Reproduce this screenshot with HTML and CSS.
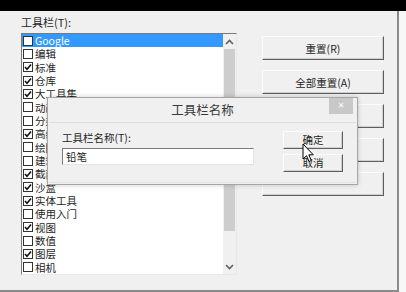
FILE: index.html
```html
<!DOCTYPE html>
<html lang="zh-CN">
<head>
  <meta charset="UTF-8">
  <title>工具栏</title>
  <link rel="stylesheet" href="styles.css">
</head>
<body>

  <div class="topbar"></div>

  <div class="screen">
    <div class="window">

      <!-- Toolbar list -->
      <div class="toolbars">
        <div class="label">工具栏(T):</div>
        <div class="listbox">
          <ul class="items">
            <li class="item selected"><span class="box"></span>Google</li>
            <li class="item"><span class="box"></span>编辑</li>
            <li class="item"><span class="box checked"></span>标准</li>
            <li class="item"><span class="box checked"></span>仓库</li>
            <li class="item"><span class="box checked"></span>大工具集</li>
            <li class="item"><span class="box"></span>动画</li>
            <li class="item"><span class="box"></span>分类</li>
            <li class="item"><span class="box checked"></span>高级镜头工具</li>
            <li class="item"><span class="box"></span>绘图</li>
            <li class="item"><span class="box"></span>建筑施工</li>
            <li class="item"><span class="box checked"></span>截面</li>
            <li class="item"><span class="box checked"></span>沙盒</li>
            <li class="item"><span class="box checked"></span>实体工具</li>
            <li class="item"><span class="box"></span>使用入门</li>
            <li class="item"><span class="box checked"></span>视图</li>
            <li class="item"><span class="box"></span>数值</li>
            <li class="item"><span class="box checked"></span>图层</li>
            <li class="item"><span class="box"></span>相机</li>
          </ul>
          <div class="scrollbar">
            <div class="arrow">
              <svg width="9" height="6" viewBox="0 0 9 6"><path d="M1 5 L4.5 1.5 L8 5" fill="none" stroke="#606060" stroke-width="1.6"/></svg>
            </div>
            <div class="thumb"></div>
            <div class="track"></div>
            <div class="arrow">
              <svg width="9" height="6" viewBox="0 0 9 6"><path d="M1 1 L4.5 4.5 L8 1" fill="none" stroke="#606060" stroke-width="1.6"/></svg>
            </div>
          </div>
        </div>
      </div>

      <!-- Buttons -->
      <div class="actions">
        <button class="btn">重置(R)</button>
        <button class="btn">全部重置(A)</button>
        <button class="btn"></button>
        <button class="btn"></button>
        <button class="btn"></button>
      </div>
    </div>

    <!-- Rename dialog -->
    <div class="dialog">
      <div class="dialog-title">
        工具栏名称
        <span class="close">&#x2715;</span>
      </div>
      <div class="dialog-body">
        <div class="field">
          <div class="field-label">工具栏名称(T):</div>
          <div class="input">铅笔</div>
        </div>
        <div class="dialog-buttons">
          <button class="btn small">确定</button>
          <button class="btn small">取消</button>
        </div>
      </div>
    </div>

    <svg class="cursor" width="13" height="20" viewBox="0 0 13 20">
      <path d="M1 1 L1 16 L4.5 12.7 L7 18.5 L9.3 17.5 L6.8 11.8 L11.3 11.8 Z" fill="#fff" stroke="#000" stroke-width="1" stroke-linejoin="round"/>
    </svg>
  </div>

</body>
</html>
```

FILE: styles.css
```css
body {
  margin: 0;
  width: 406px;
  height: 292px;
  overflow: hidden;
  background: #f7f7f7;
  color: #1e1e1e;
  font-family: "Noto Sans CJK SC", "Noto Sans", sans-serif;
  font-size: 11px;
}

.topbar {
  height: 11px;
  background: #000;
}

.screen {
  position: relative;
}

.window {
  box-sizing: border-box;
  width: 399px;
  height: 281px;
  display: flex;
  padding: 3px 0 0 21px;
  background: #f0f0f0;
  border-right: 2px solid #8a8a8a;
  border-bottom: 2px solid #8a8a8a;
}

/* Toolbar list */
.toolbars {
  width: 216px;
}

.label {
  height: 19px;
  line-height: 16px;
}

.listbox {
  box-sizing: border-box;
  height: 242px;
  display: flex;
  background: #fff;
  border: 1px solid;
  border-color: #7a7a7a #e8e8e8 #e8e8e8 #7a7a7a;
}

.items {
  flex: 1;
  list-style: none;
  margin: 0;
  padding: 0;
}

.item {
  height: 13.33px;
  display: flex;
  align-items: center;
  padding-left: 1px;
  font-size: 10.5px;
  line-height: 13px;
  white-space: nowrap;
}

.item.selected {
  background: #3399ff;
  color: #fff;
}

.box {
  box-sizing: border-box;
  width: 10px;
  height: 10px;
  margin-right: 2px;
  flex: none;
  background: #fff;
  border: 1px solid #333;
}

.box.checked {
  background: #fff url("data:image/svg+xml,%3Csvg xmlns='http://www.w3.org/2000/svg' width='8' height='8' viewBox='0 0 8 8'%3E%3Cpath d='M1 4 L3 6.2 L7 1.5' fill='none' stroke='%23111' stroke-width='1.6'/%3E%3C/svg%3E") center no-repeat;
}

.scrollbar {
  width: 13px;
  display: flex;
  flex-direction: column;
  background: #f0f0f0;
}

.arrow {
  height: 15px;
  display: flex;
  align-items: center;
  justify-content: center;
}

.thumb {
  height: 182px;
  margin: 0 1px;
  background: #cdcdcd;
}

.track {
  flex: 1;
}

/* Buttons */
.actions {
  margin-left: 25px;
  padding-top: 22px;
  display: flex;
  flex-direction: column;
  gap: 10px;
}

.btn {
  box-sizing: border-box;
  width: 122px;
  height: 24px;
  padding: 0;
  background: #f0f0f0;
  color: #1e1e1e;
  font-family: inherit;
  font-size: 10.5px;
  border: 1px solid;
  border-color: #fcfcfc #5e5e5e #5e5e5e #fcfcfc;
  box-shadow: inset -1px -1px 0 #d0d0d0;
}

.btn.small {
  width: 60px;
  height: 18px;
  line-height: 14px;
}

/* Dialog */
.dialog {
  position: absolute;
  left: 47px;
  top: 86px;
  box-sizing: border-box;
  width: 311px;
  height: 88px;
  background: #f0f0f0;
  border: 1px solid #a5a5a5;
  box-shadow: 0 0 5px rgba(0, 0, 0, 0.2);
}

.dialog-title {
  position: relative;
  height: 24px;
  line-height: 24px;
  text-align: center;
  font-size: 12.5px;
  color: #3a3a3a;
}

.close {
  position: absolute;
  right: 4px;
  top: 0;
  width: 24px;
  height: 16px;
  line-height: 16px;
  background: #c8c8c8;
  color: #fff;
  font-size: 8px;
  font-family: "DejaVu Sans", sans-serif;
  font-weight: bold;
}

.dialog-body {
  box-sizing: border-box;
  height: 61px;
  margin: 0 1px;
  display: flex;
  padding: 8px 0 0 13px;
  border-top: 1px solid #dedede;
  border-bottom: 1px solid #e4e4e4;
}

.field-label {
  height: 14px;
  line-height: 14px;
  font-size: 10.5px;
}

.input {
  box-sizing: border-box;
  width: 192px;
  height: 17px;
  margin-top: 3px;
  padding-left: 3px;
  line-height: 15px;
  font-size: 10.5px;
  background: #fff;
  border: 1px solid;
  border-color: #7a7a7a #e3e3e3 #e3e3e3 #7a7a7a;
}

.dialog-buttons {
  margin-left: 29px;
  display: flex;
  flex-direction: column;
  gap: 5px;
}

.cursor {
  position: absolute;
  left: 302px;
  top: 132px;
}
```
